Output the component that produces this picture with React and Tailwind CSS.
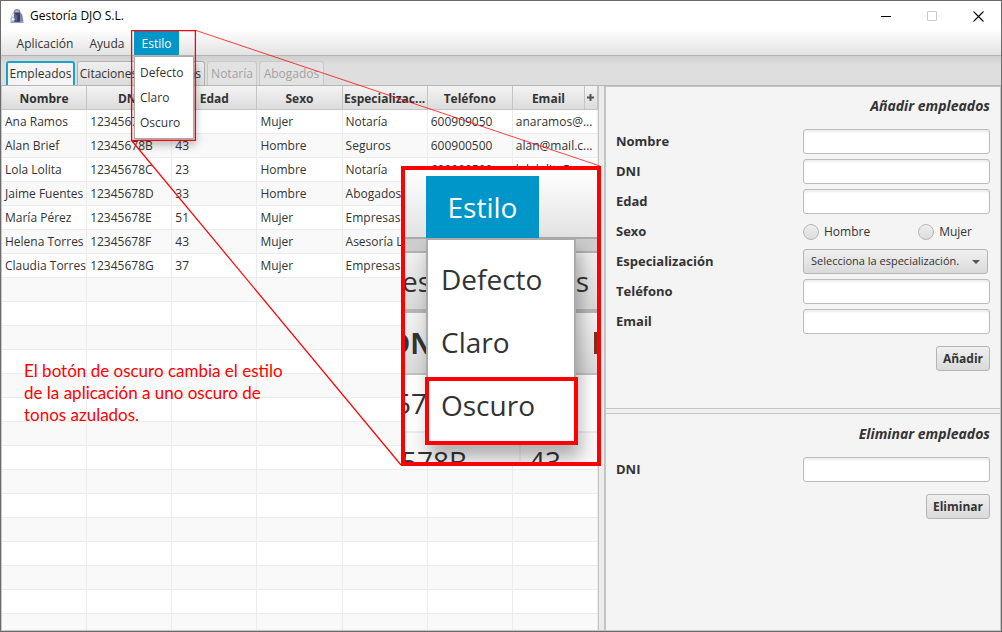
import React from "react";

const columns = ["Nombre", "DNI", "Edad", "Sexo", "Especializac...", "Teléfono", "Email"];

const employees = [
  ["Ana Ramos", "12345678A", "", "Mujer", "Notaría", "600909050", "anaramos@..."],
  ["Alan Brief", "12345678B", "43", "Hombre", "Seguros", "600900500", "alan@mail.c..."],
  ["Lola Lolita", "12345678C", "23", "Hombre", "Notaría", "600900500", "lolalolita5..."],
  ["Jaime Fuentes", "12345678D", "33", "Hombre", "Abogados", "", ""],
  ["María Pérez", "12345678E", "51", "Mujer", "Empresas", "", ""],
  ["Helena Torres", "12345678F", "43", "Mujer", "Asesoría La...", "", ""],
  ["Claudia Torres", "12345678G", "37", "Mujer", "Empresas", "", ""],
];

const emptyRow = ["", "", "", "", "", "", ""];
const rows = [...employees, ...Array.from({ length: 15 }, () => emptyRow)];

const tabs = [
  { name: "Empleados", style: "w-[69px] border-2 border-b-0 border-[#1ba1cf] bg-[#f4f4f4]" },
  { name: "Citaciones", style: "w-[63px] border border-b-0 border-[#b0b0b0] bg-linear-to-b from-[#efefef] to-[#dcdcdc]" },
  { name: "Empresas", style: "w-[63px] border border-b-0 border-[#b0b0b0] bg-linear-to-b from-[#efefef] to-[#dcdcdc]" },
  { name: "Notaría", style: "w-[50px] border border-b-0 border-[#c8c8c8] bg-[#e2e2e2] text-[#a3a3a3]" },
  { name: "Abogados", style: "w-[65px] border border-b-0 border-[#c8c8c8] bg-[#e2e2e2] text-[#a3a3a3]" },
];

const styles = ["Defecto", "Claro", "Oscuro"];

function AppIcon() {
  return (
    <svg className="size-4" viewBox="0 0 16 16" aria-hidden="true">
      <path d="M1.500 13.500C1.500 10 3 5 5 3.500C6 1 10 1 11 3.500C13 5 14.500 10 14.500 13.500z" fill="#aeb6da" />
      <path d="M3 6.500l2-1.500v8.500H2z" fill="#dfe5f5" />
      <path d="M13 6.500l-2-1.500v8.500h3z" fill="#7284c0" />
      <path d="M5.500 5V3.200C5.500 1 10.500 1 10.500 3.200V5" fill="none" stroke="#8489a0" strokeWidth="1.300" />
      <path d="M5.300 4.500h5.700v9.500H5.300z" fill="#3c4158" />
      <path d="M6.300 6l1.400 1v5.500H6.300z" fill="#73799a" />
      <circle cx="3.900" cy="11.300" r="1.800" fill="#f4f6fc" stroke="#8290c4" strokeWidth=".6" />
      <path d="M1.500 14.200h13" stroke="#6572ab" strokeWidth="1" />
    </svg>
  );
}

function TitleBar() {
  return (
    <header className="flex h-[30px] shrink-0 items-center bg-white pl-2 text-black">
      <AppIcon />
      <h1 className="ml-[5px] flex-1 text-[12px]">Gestoría DJO S.L.</h1>
      <button aria-label="Minimizar" className="flex h-full w-[46px] items-center justify-center">
        <svg className="size-[11px]" viewBox="0 0 11 11"><path d="M0 5.500h10" stroke="#000" /></svg>
      </button>
      <button aria-label="Maximizar" disabled className="flex h-full w-[46px] items-center justify-center">
        <svg className="size-[11px]" viewBox="0 0 11 11"><path d="M.5.5h9v9h-9z" fill="none" stroke="#ccc" /></svg>
      </button>
      <button aria-label="Cerrar" className="flex h-full w-[46px] items-center justify-center">
        <svg className="size-[11px]" viewBox="0 0 11 11"><path d="M.5.5l10 10m0-10l-10 10" stroke="#000" strokeWidth="1.100" /></svg>
      </button>
    </header>
  );
}

function MenuBar() {
  return (
    <nav className="flex h-[25px] shrink-0 border-b border-[#b5b5b5] bg-linear-to-b from-[#fdfdfd] to-[#e3e3e3] pl-[9px]">
      <button className="w-[70px] pt-px">Aplicación</button>
      <button className="w-[54px] pt-px">Ayuda</button>
      <div className="relative flex">
        <button aria-expanded="true" className="w-[45px] bg-[#0096c9] pt-px text-white">Estilo</button>
        <div role="menu" className="absolute top-[25px] left-0 z-10 flex w-[60px] flex-col border border-[#aaa] bg-white py-[3px] shadow-[2px_6px_8px_rgba(0,0,0,0.25)]">
          {styles.map((s) => (
            <button role="menuitem" key={s} className="h-[25px] pl-[5px] text-left">{s}</button>
          ))}
        </div>
      </div>
    </nav>
  );
}

function Tabs() {
  return (
    <div role="tablist" className="flex h-[30px] shrink-0 items-end gap-[2px] border-b border-[#b5b5b5] bg-linear-to-b from-[#cfcfcf] to-[#dedede] to-30% pl-[5px]">
      {tabs.map((t, i) => (
        <button key={t.name} role="tab" aria-selected={i === 0} className={`flex h-6 items-center justify-center rounded-t-[3px] whitespace-nowrap ${t.style}`}>
          {t.name}
        </button>
      ))}
    </div>
  );
}

function EmployeeTable() {
  return (
    <section className="min-h-0 min-w-0 flex-602 overflow-hidden border-l border-[#c8c8c8] bg-white">
      <table className="w-full table-fixed border-separate border-spacing-0">
        <thead>
          <tr>
            {columns.map((c, i) => (
              <th key={c} className="h-6 border-r border-b border-[#c4c4c4] bg-linear-to-b from-[#f4f4f4] to-[#dcdcdc] p-0 font-bold">
                <div className="flex h-[23px] items-center">
                  <span className="flex-1 overflow-hidden pt-[2px] text-center whitespace-nowrap">{c}</span>
                  {i === columns.length - 1 && (
                    <button aria-label="Mostrar columnas" className="flex h-full w-[13px] items-center justify-center border-l border-[#c4c4c4]">
                      <svg className="size-[7px]" viewBox="0 0 7 7"><path d="M3.500 0v7M0 3.500h7" stroke="#555" strokeWidth="2" /></svg>
                    </button>
                  )}
                </div>
              </th>
            ))}
          </tr>
        </thead>
        <tbody>
          {rows.map((row, r) => (
            <tr key={r} className="even:bg-[#f9f9f9]">
              {row.map((value, c) => (
                <td key={c} className="h-6 overflow-hidden border-r border-b border-[#ececec] py-0 pl-[3px] leading-5 whitespace-nowrap">{value}</td>
              ))}
            </tr>
          ))}
        </tbody>
      </table>
    </section>
  );
}

const labelStyle = "text-[13px] font-bold";
const boxStyle = "h-[25px] w-full rounded-[3px] border border-[#bdbdbd] bg-white px-2 shadow-[inset_0_2px_2px_rgba(0,0,0,0.08)]";
const gridStyle = "mt-[13px] grid grid-cols-2 items-center gap-y-[5px]";
const titleStyle = "h-5 text-right text-[14px] leading-5 font-bold italic";
const buttonStyle = "mt-3 flex h-[25px] items-center self-end rounded-[3px] border border-[#b5b5b5] bg-linear-to-b from-[#f0f0f0] to-[#dadada] px-[6px] font-bold";

function Field({ id, label }) {
  return (
    <>
      <label htmlFor={id} className={labelStyle}>{label}</label>
      <input id={id} type="text" className={boxStyle} />
    </>
  );
}

const radioStyle = "size-4 appearance-none rounded-full border border-[#b8b8b8] bg-linear-to-b from-[#eeeeee] to-[#dcdcdc] checked:bg-[#0096c9]";

function AddForm() {
  return (
    <form className="flex min-h-0 flex-603 flex-col px-[10px] pt-[9px]">
      <h2 className={titleStyle}>Añadir empleados</h2>
      <div className={gridStyle}>
        <Field id="nombre" label="Nombre" />
        <Field id="dni" label="DNI" />
        <Field id="edad" label="Edad" />
        <span id="sexo" className={labelStyle}>Sexo</span>
        <div role="radiogroup" aria-labelledby="sexo" className="flex h-[25px] items-center justify-between pr-[18px]">
          <label className="flex items-center gap-[5px]"><input type="radio" name="sexo" className={radioStyle} />Hombre</label>
          <label className="flex items-center gap-[5px]"><input type="radio" name="sexo" className={radioStyle} />Mujer</label>
        </div>
        <label htmlFor="especializacion" className={labelStyle}>Especialización</label>
        <div className="relative mr-[2px]">
          <select id="especializacion" className="block h-[25px] w-full appearance-none rounded-[3px] border border-[#b5b5b5] bg-linear-to-b from-[#f0f0f0] to-[#dadada] pl-[7px] text-[11px]">
            <option>Selecciona la especialización.</option>
          </select>
          <svg className="pointer-events-none absolute top-[11px] right-2 h-1 w-2" viewBox="0 0 8 4"><path d="M0 0h8L4 4z" fill="#555" /></svg>
        </div>
        <Field id="telefono" label="Teléfono" />
        <Field id="email" label="Email" />
      </div>
      <button type="button" className={buttonStyle}>Añadir</button>
    </form>
  );
}

function RemoveForm() {
  return (
    <form className="flex min-h-0 flex-397 flex-col px-[10px] pt-[10px]">
      <h2 className={titleStyle}>Eliminar empleados</h2>
      <div className={gridStyle}>
        <Field id="dni-eliminar" label="DNI" />
      </div>
      <button type="button" className={buttonStyle}>Eliminar</button>
    </form>
  );
}

// Enlarged copy of the style menu, shown over the window.
function Magnifier() {
  return (
    <div className="absolute top-[165px] left-[400px] z-20 h-[300px] w-[200px] overflow-hidden border-4 border-[#f00] text-[28px] leading-none" aria-hidden="true">
      <div className="flex flex-col">
        <div className="h-[69px] border-b-2 border-[#aaa] bg-linear-to-b from-white to-[#e3e3e3]" />
        <div className="h-[14px] border-b-2 border-[#b0b0b0] bg-[#cdcdcd]" />
        <div className="flex h-[60px] items-center justify-between overflow-hidden border-b-4 border-[#b5b5b5] bg-linear-to-b from-[#efefef] to-[#d8d8d8]">
          <div className="flex w-[26px] justify-end"><span>es</span></div>
          <span className="pr-2">s</span>
        </div>
        <div className="flex h-[62px] items-center justify-between overflow-hidden border-b-2 border-[#c0c0c0] bg-linear-to-b from-[#f2f2f2] to-[#d8d8d8] font-bold">
          <div className="flex w-[28px] justify-end"><span>DN</span></div>
          <div className="h-[22px] w-[3px] bg-[#7a3020]" />
        </div>
        <div className="flex h-[58px] items-center overflow-hidden border-b-2 border-[#ececec] bg-white">
          <div className="flex w-[22px] justify-end"><span>57</span></div>
        </div>
        <div className="flex h-[34px] bg-[#f9f9f9]">
          <span className="-ml-1 w-[120px] border-r-2 border-[#ececec] pt-[14px]">578B</span>
          <span className="pt-[14px] pl-2">43</span>
        </div>
      </div>
      <div className="absolute top-[6px] left-[21px] flex flex-col">
        <div className="flex h-[62px] w-[113px] items-center justify-center bg-[#0096c9] text-white">Estilo</div>
        <div className="flex w-[150px] flex-col border-2 border-[#aaa] bg-white py-[7px] shadow-[4px_12px_16px_rgba(0,0,0,0.3)]">
          {styles.map((s) => (
            <div key={s} className="flex h-[63px] items-center pl-[13px]">{s}</div>
          ))}
        </div>
      </div>
      <div className="absolute top-[207px] left-[20px] h-[68px] w-[153px] border-4 border-[#f00]" />
    </div>
  );
}

function Annotations() {
  return (
    <>
      <svg className="pointer-events-none absolute top-0 left-0 z-20 h-[480px] w-[610px]" viewBox="1 1 610 480" aria-hidden="true">
        <path d="M131.600 30.600H195.400V140.400H131.600z" fill="none" stroke="#f00" strokeWidth="1.300" />
        <path d="M196 30.500L600 166" stroke="#f00" strokeWidth="1" strokeOpacity=".75" />
        <path d="M132 141L401 465" stroke="#f00" strokeWidth="1.200" />
      </svg>
      <Magnifier />
      <p className="absolute top-[359px] left-[23px] z-20 w-[280px] font-[Lato,sans-serif] text-[17px] leading-[22px] text-[#f00]">
        El botón de oscuro cambia el estilo<br />de la aplicación a uno oscuro de<br />tonos azulados.
      </p>
    </>
  );
}

export default function App() {
  return (
    <div className="relative flex h-screen flex-col overflow-hidden border border-[#6b6b6b] bg-[#f4f4f4] font-['Open_Sans','Noto_Sans',sans-serif] text-[12px] text-[#333]">
      <TitleBar />
      <MenuBar />
      <Tabs />
      <main className="flex min-h-0 flex-1 border-r border-b border-[#c4c4c4]">
        <EmployeeTable />
        <div className="w-2 shrink-0 border-r-2 border-l border-[#c4c4c4] bg-[#ececec]" />
        <aside className="flex min-h-0 min-w-0 flex-398 flex-col border-t border-[#c4c4c4]">
          <AddForm />
          <div className="h-[6px] shrink-0 border-y border-[#c4c4c4] bg-[#f0f0f0]" />
          <RemoveForm />
        </aside>
      </main>
      <Annotations />
    </div>
  );
}
